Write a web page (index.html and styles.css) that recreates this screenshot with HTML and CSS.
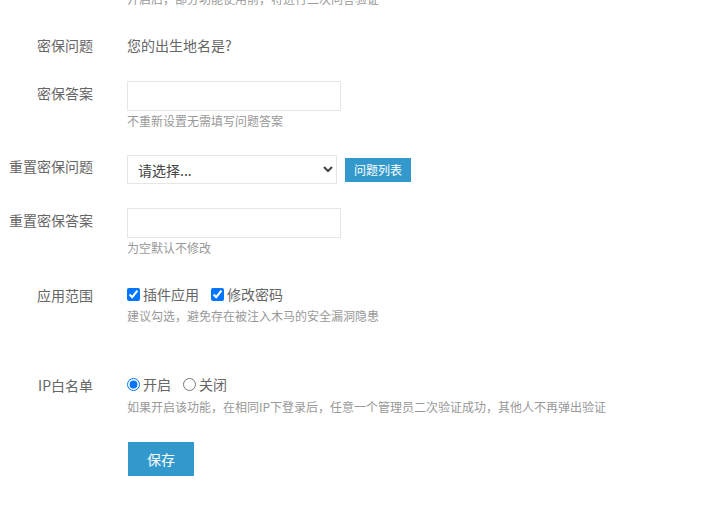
FILE: index.html
```html
<!DOCTYPE html>
<html lang="zh-CN">
<head>
<meta charset="utf-8">
<title>二次验证设置</title>
<link rel="stylesheet" href="styles.css">
</head>
<body>
<form class="form">
  <div class="row row-top">
    <div class="label"></div>
    <div class="field">
      <div class="hint">开启后，部分功能使用前，将进行二次问答验证</div>
    </div>
  </div>

  <div class="row row-q">
    <div class="label">密保问题</div>
    <div class="field"><div class="value">您的出生地名是?</div></div>
  </div>

  <div class="row row-a">
    <div class="label label-input">密保答案</div>
    <div class="field">
      <input class="text-input" type="text">
      <div class="hint hint-tight">不重新设置无需填写问题答案</div>
    </div>
  </div>

  <div class="row row-rq">
    <div class="label label-select">重置密保问题</div>
    <div class="field field-inline">
      <select class="select">
        <option>请选择...</option>
      </select>
      <button type="button" class="btn btn-sm">问题列表</button>
    </div>
  </div>

  <div class="row row-ra">
    <div class="label label-input">重置密保答案</div>
    <div class="field">
      <input class="text-input" type="text">
      <div class="hint hint-tight">为空默认不修改</div>
    </div>
  </div>

  <div class="row row-scope">
    <div class="label">应用范围</div>
    <div class="field">
      <div class="options">
        <label class="opt"><input type="checkbox" checked>插件应用</label>
        <label class="opt"><input type="checkbox" checked>修改密码</label>
      </div>
      <div class="hint hint-loose">建议勾选，避免存在被注入木马的安全漏洞隐患</div>
    </div>
  </div>

  <div class="row row-ip">
    <div class="label">IP白名单</div>
    <div class="field">
      <div class="options">
        <label class="opt"><input type="radio" name="ip" checked>开启</label>
        <label class="opt"><input type="radio" name="ip">关闭</label>
      </div>
      <div class="hint hint-ip">如果开启该功能，在相同IP下登录后，任意一个管理员二次验证成功，其他人不再弹出验证</div>
    </div>
  </div>

  <div class="row row-save">
    <div class="label"></div>
    <div class="field">
      <button type="button" class="btn btn-save">保存</button>
    </div>
  </div>
</form>
</body>
</html>
```

FILE: styles.css
```css
* { box-sizing: border-box; }

html, body {
  margin: 0;
  padding: 0;
  background: #fff;
  overflow: hidden;
}

body {
  font-family: "Noto Sans CJK SC", "Noto Sans", "Liberation Sans", sans-serif;
  font-size: 14px;
  color: #666;
}

.form {
  display: flex;
  flex-direction: column;
}

.row {
  display: flex;
  align-items: flex-start;
}

.label {
  width: 93px;
  flex: none;
  text-align: right;
  line-height: 20px;
  color: #666;
  white-space: nowrap;
}

.label-input { padding-top: 2px; }
.label-select { padding-top: 1px; }

.field {
  margin-left: 34px;
  display: flex;
  flex-direction: column;
  align-items: flex-start;
}

.field-inline {
  flex-direction: row;
  align-items: center;
}

.value {
  line-height: 20px;
  color: #666;
}

.hint {
  font-size: 12px;
  line-height: 18px;
  color: #999;
  white-space: nowrap;
}

.hint-tight { margin-top: 1px; }
.hint-loose { margin-top: 3px; }
.hint-ip { margin-top: 4px; }

.row-top { margin-top: -10px; }
.row-q { margin-top: 27px; }
.row-a { margin-top: 26px; }
.row-rq { margin-top: 25px; }
.row-ra { margin-top: 24px; }
.row-scope { margin-top: 28px; }
.row-ip { margin-top: 50px; }
.row-save { margin-top: 26px; }

.text-input {
  width: 214px;
  height: 30px;
  border: 1px solid #e6e6e6;
  background: #fff;
  padding: 0 8px;
  font: inherit;
  outline: none;
  margin: 0;
}

.select {
  width: 210px;
  height: 29px;
  border: 1px solid #e6e6e6;
  background: #fff;
  color: #444;
  font: inherit;
  padding: 0 4px 0 6px;
  margin: 0;
  border-radius: 0;
  outline: none;
}

.btn {
  border: none;
  background: #3399cc;
  color: #fff;
  font-family: inherit;
  padding: 0;
  margin: 0;
  cursor: pointer;
}

.btn-sm {
  width: 66px;
  height: 24px;
  font-size: 12px;
  margin-left: 8px;
}

.btn-save {
  width: 66px;
  height: 34px;
  font-size: 14px;
  margin-left: 1px;
}

.options {
  display: flex;
  align-items: center;
  gap: 12px;
  line-height: 20px;
  margin-top: -1px;
}

.opt {
  display: flex;
  align-items: center;
  color: #666;
}

.opt input {
  width: 13px;
  height: 13px;
  margin: 0 3px 0 0;
}
```
